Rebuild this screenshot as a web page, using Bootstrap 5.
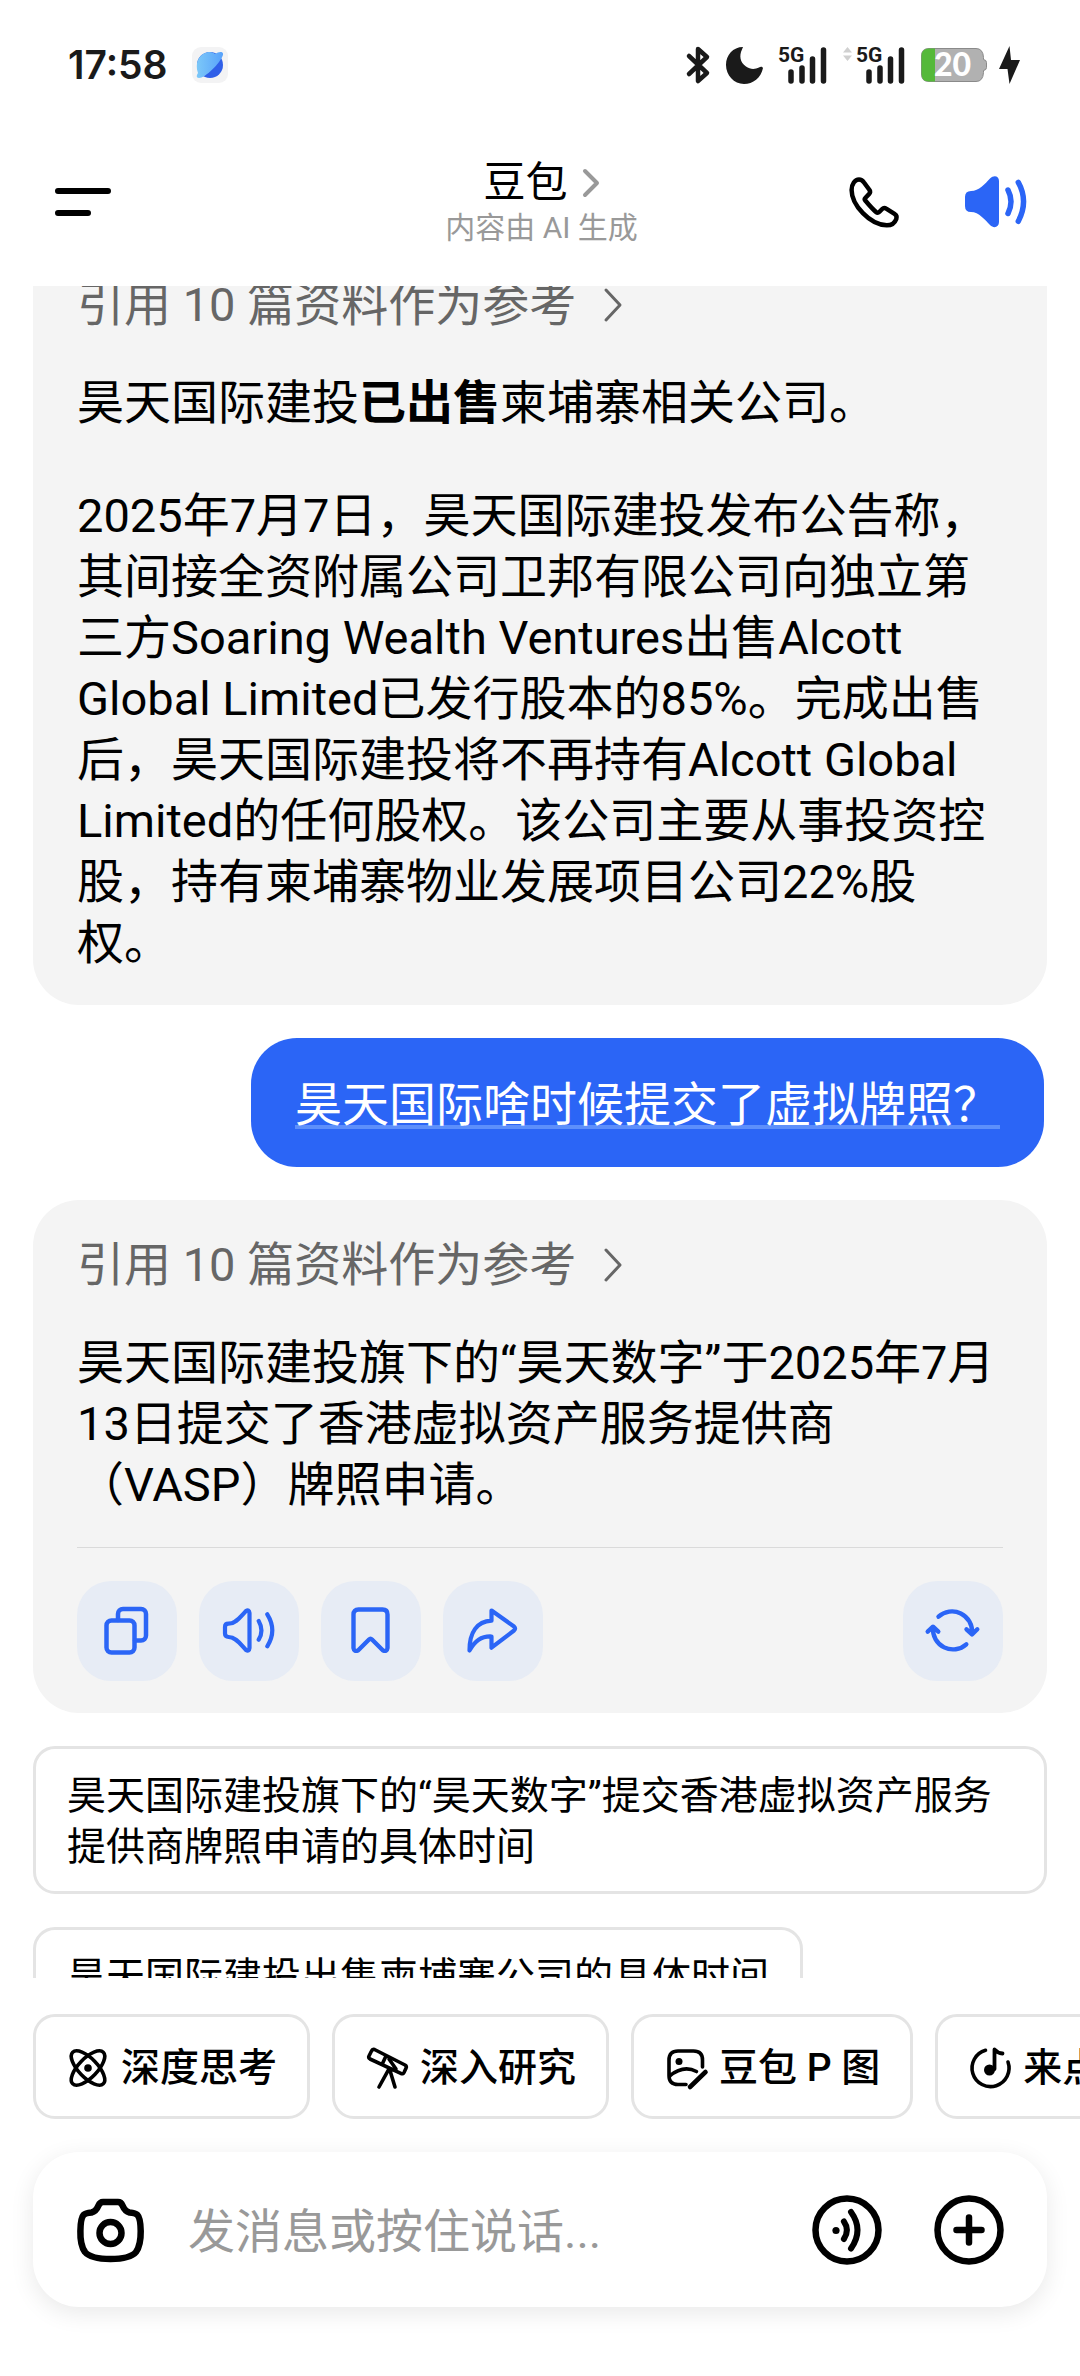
<!DOCTYPE html>
<html lang="zh-CN">
<head>
<meta charset="utf-8">
<meta name="viewport" content="width=device-width, initial-scale=1">
<title>豆包</title>
<link href="https://cdn.jsdelivr.net/npm/bootstrap@5.3.0/dist/css/bootstrap.min.css" rel="stylesheet">
<style>
  :root { --brand: #2b65f6; --line: #e4e4e4; }
  body { font-family: Roboto, "Noto Sans CJK SC", sans-serif; color: #000; background: #fff; text-spacing-trim: space-all; }
  svg { display: block; flex: none; overflow: visible; }
  .ln { fill: none; stroke: currentColor; stroke-linecap: round; stroke-linejoin: round; }
  .gutter { padding-left: 33px; padding-right: 33px; }

  .status { height: 130px; padding: 0 60px 0 68px; color: #1a1a1a; }
  .clock { font: 600 39px/48px Inter, sans-serif; margin-right: 24px; }
  .net { font: 700 21px Roboto, sans-serif; }
  .pct { font: 900 32px Lato, sans-serif; }
  .bolt { margin-left: 12px; }

  .topbar { height: 144px; margin-bottom: 12px; padding: 0 52px 0 55px; }
  .heading { padding-top: 4px; }
  .name { font-size: 42px; line-height: 48px; gap: 14px; }
  .name svg { color: #999; }
  .sub { font-size: 30px; line-height: 42px; color: #999; }
  .plain { background: none; border: 0; padding: 0; color: inherit; }
  .calls { gap: 64px; }
  .voice { color: var(--brand); }

  .chat { overflow-y: auto; scrollbar-width: none; gap: 33px; }
  .chat::-webkit-scrollbar { display: none; }
  .chat > * { flex: none; }
  .answer { background: #f4f4f4; border-radius: 46px; padding: 34px 44px 32px; font-size: 47px; line-height: 61px; }
  .answer p { margin: 0 0 52px; }
  .answer p:last-child { margin-bottom: 0; }
  .source { color: #666; text-decoration: none; gap: 28px; margin-bottom: 37px; }
  .question { background: var(--brand); color: #fff; border-radius: 46px; padding: 36px 44px 32px; margin-right: 3px; font-size: 47px; line-height: 61px; }
  .question span { text-decoration: underline 4px #5d8ffb; text-underline-offset: 4px; text-decoration-skip-ink: none; }
  .tools { border-top: 1px solid #dadada; margin-top: 32px; padding-top: 33px; gap: 22px; }
  .tool { width: 100px; height: 100px; border: 0; border-radius: 34px; background: #e7ecf5; color: var(--brand); }
  .hint { border: 3px solid var(--line); border-radius: 22px; background: #fff; padding: 22px 31px 18px; font-size: 39px; line-height: 51px; text-align: left; color: #000; max-width: 100%; }

  .chips { gap: 22px; overflow: hidden; margin-top: 36px; }
  .chip { border: 3px solid var(--line); border-radius: 22px; background: #fff; height: 105px; padding: 0 30px; gap: 11px; font-size: 39px; font-weight: 500; white-space: nowrap; flex: none; color: #000; }
  .chip span { padding-top: 4px; }
  .composer { height: 155px; border-radius: 46px; margin: 33px 33px 69px; padding: 0 43px 0 44px; background: #fff; box-shadow: 0 6px 24px rgba(0,0,0,.09); }
  .composer input { font-size: 47px; line-height: 61px; border: 0; outline: 0; background: none; margin: 0 46px 0 44px; min-width: 0; padding: 4px 0 0; }
  .composer input::placeholder { color: #999; opacity: 1; }
  .sends { gap: 52px; }
</style>
</head>
<body class="vh-100 d-flex flex-column overflow-hidden">

<div class="status d-flex align-items-center flex-shrink-0">
  <div class="clock">17:58</div>
  <svg width="36" height="36" viewBox="0 0 36 36">
    <defs><linearGradient id="pl" x1="0" x2="1"><stop offset="0" stop-color="#7cc8f8"/><stop offset="1" stop-color="#58a2fb"/></linearGradient></defs>
    <rect width="36" height="36" rx="9" fill="#f3f3f4"/>
    <circle cx="18" cy="18" r="13" fill="#2f5fe8"/>
    <path d="M23 7c3-2 7-3 8-.5C32 11 18 27 9.500 30.500 4 32 4 29 6 26 2 14 9 5 18 5c2 0 4 1 5 2z" fill="url(#pl)"/>
  </svg>
  <div class="ms-auto d-flex align-items-center">
    <svg width="24" height="38" viewBox="0 0 24 38"><path class="ln" stroke-width="4.500" d="M3 10l18 17-9 8V3l9 8L3 28"/></svg>
    <svg class="ms-3" width="37" height="38" viewBox="0 0 37 38"><path fill="#1a1a1a" d="M17 1C7 1 0 9 0 19s8 19 18 19c9 0 17-6 19-16-1-2-3-1-4-.5-4 2-9 2-13-1-6-4-7-11-4-17 .6-1.500.8-2 1-2.500z"/></svg>
    <svg class="ms-3" width="48" height="38" viewBox="0 0 48 38"><text class="net" x="-1" y="16" fill="#1a1a1a">5G</text><path class="ln" stroke-width="5.500" d="M12 26v9M23 22v13M33.500 13v22M44.500 4v31"/></svg>
    <svg class="ms-3" width="62" height="38" viewBox="0 0 62 38"><path fill="#d0d0d0" d="M0 6.500L4.500 1 9 6.500zM0 9.500L4.500 15 9 9.500z"/><text class="net" x="13" y="16" fill="#1a1a1a">5G</text><path class="ln" stroke-width="5.500" d="M26 26v9M37 22v13M47.500 13v22M58.500 4v31"/></svg>
    <svg class="ms-3" width="66" height="34" viewBox="0 0 66 34"><path fill="#b1b1b1" stroke="#8a8a8a" d="M8 .5h47q7 0 7.500 9v2q3 .5 3 3v5q0 2.500-3 3v2q-.5 9-7.500 9H8Q.5 33.500.5 26V8Q.5.5 8 .5z"/><path fill="#55b93a" d="M14 .5H8Q.5.5.5 8v18q0 7.500 7.500 7.500h6z"/><text class="pct" x="13" y="28" fill="#fff">20</text></svg>
    <svg class="bolt" width="21" height="38" viewBox="0 0 21 38"><path fill="#1a1a1a" d="M10.500 0L0 23h8.500l2 15L21 14h-9z"/></svg>
  </div>
</div>

<header class="topbar d-flex align-items-center flex-shrink-0">
  <div class="col d-flex">
    <button class="plain" aria-label="菜单"><svg width="56" height="30" viewBox="0 0 56 30"><path class="ln" stroke-width="6" d="M3 4h50M3 26h30"/></svg></button>
  </div>
  <div class="heading text-center">
    <button class="plain name d-flex align-items-center mx-auto">豆包<svg width="18" height="30" viewBox="0 0 18 30"><path class="ln" stroke-width="4" d="M3 3l12 12L3 27"/></svg></button>
    <div class="sub">内容由 AI 生成</div>
  </div>
  <div class="calls col d-flex justify-content-end align-items-center">
    <button class="plain" aria-label="通话"><svg width="52" height="52" viewBox="0 0 52 52"><path class="ln" stroke-width="4.500" d="M11 3.500c2.500 0 4 1.500 5 3l5.500 7.500c1 1.700.7 3-.5 4.200l-3.500 3.600c-1 1-1 2 0 3C21 29 24.500 33 28 36c1.200 1 2.200 1 3.200 0l3-3c1-1 2.500-1.300 4-.3l8.300 5.200c2 1.300 2.500 3 1.800 5-1.500 4-5 6.400-9.500 6.400C22 49 3.600 29 3.600 14 3.600 8 7 3.500 11 3.500z"/></svg></button>
    <button class="plain voice" aria-label="朗读"><svg width="64" height="52" viewBox="0 0 64 52"><path fill="currentColor" d="M7 15C15 15 21 8 26 2.500 30-1.500 35 0 35 5v41c0 5-5 7-9 3C21 44 15 36 7 36q-6 0-6-6v-9q0-6 6-6z"/><path class="ln" stroke-width="5.500" d="M44 14q6 11.500 0 23.500M54.300 6.300q10.500 19 0 39"/></svg></button>
  </div>
</header>

<main class="chat gutter d-flex flex-column flex-grow-1" id="chat">
  <article class="answer">
    <a href="#" class="source d-flex align-items-center">引用 10 篇资料作为参考<svg width="19" height="34" viewBox="0 0 19 34"><path class="ln" stroke-width="3" d="M2 2l14 15L2 32"/></svg></a>
    <p>昊天国际建投<strong>已出售</strong>柬埔寨相关公司。</p>
    <p>2025年7月7日，昊天国际建投发布公告称，其间接全资附属公司卫邦有限公司向独立第三方Soaring Wealth Ventures出售Alcott Global Limited已发行股本的85%。完成出售后，昊天国际建投将不再持有Alcott Global Limited的任何股权。该公司主要从事投资控股，持有柬埔寨物业发展项目公司22%股权。</p>
  </article>

  <div class="question align-self-end"><span>昊天国际啥时候提交了虚拟牌照？</span></div>

  <article class="answer">
    <a href="#" class="source d-flex align-items-center">引用 10 篇资料作为参考<svg width="19" height="34" viewBox="0 0 19 34"><path class="ln" stroke-width="3" d="M2 2l14 15L2 32"/></svg></a>
    <div>昊天国际建投旗下的“昊天数字”于2025年7月13日提交了香港虚拟资产服务提供商（VASP）牌照申请。</div>
    <div class="tools d-flex">
      <button class="tool d-flex align-items-center justify-content-center p-0" aria-label="复制"><svg width="48" height="48" viewBox="0 0 48 48"><g class="ln" stroke-width="4.500"><rect x="3.500" y="13.500" width="28" height="32" rx="5"/><path d="M15 13V7a5 5 0 0 1 5-5h18a5 5 0 0 1 5 5v21.500a5 5 0 0 1-5 5h-6"/></g></svg></button>
      <button class="tool d-flex align-items-center justify-content-center p-0" aria-label="朗读"><svg width="48" height="48" viewBox="0 0 48 48"><path class="ln" stroke-width="4.200" d="M3.500 16.700C11 16.700 16 9 21 4q3-2 3.500 2v35q-.5 4-3.500 2C16 38 11 30 3.500 30Q0 30 0 26.500v-6.500q0-3.300 3.500-3.300zM33.700 14q5.500 9.500 0 18.700M42.300 7.300q10 16 0 32"/></svg></button>
      <button class="tool d-flex align-items-center justify-content-center p-0" aria-label="收藏"><svg width="48" height="48" viewBox="0 0 48 48"><path class="ln" stroke-width="4.400" d="M6.500 7.500q0-5 5-5h24q5 0 5 5V41q-.5 4-4.500 2.500L25 32.500q-1.500-1.500-3 0L11 43.500Q7 45 6.500 41z"/></svg></button>
      <button class="tool d-flex align-items-center justify-content-center p-0" aria-label="分享"><svg width="48" height="48" viewBox="0 0 48 48"><path class="ln" stroke-width="4.200" d="M22.500 3.500l22.500 16q2.200 2 0 4L22.500 40.700V29.500C12 29 6 34 .5 43.500.5 25 8 14.500 22.500 13.700z"/></svg></button>
      <button class="tool d-flex align-items-center justify-content-center p-0 ms-auto" aria-label="重新生成"><svg width="48" height="48" viewBox="0 0 48 48"><path class="ln" stroke-width="4.400" d="M9.500 9.700A20 20 0 0 1 43 26M37.500 22.300l5.500 5.200 5.300-5.200M37.300 37.300A20 20 0 0 1 4 21M-1.300 24.700L4 19.700l5.300 5"/></svg></button>
    </div>
  </article>

  <button class="hint align-self-start">昊天国际建投旗下的“昊天数字”提交香港虚拟资产服务提供商牌照申请的具体时间</button>
  <button class="hint align-self-start">昊天国际建投出售柬埔寨公司的具体时间</button>
</main>

<footer class="flex-shrink-0">
  <nav class="chips gutter d-flex pe-0">
    <button class="chip d-flex align-items-center"><svg width="44" height="44" viewBox="0 0 44 44"><g class="ln" stroke-width="3.600"><ellipse cx="22" cy="23" rx="22" ry="9.500" transform="rotate(46 22 23)"/><ellipse cx="22" cy="23" rx="22" ry="9.500" transform="rotate(-46 22 23)"/></g><circle cx="22" cy="23" r="3.800"/></svg><span>深度思考</span></button>
    <button class="chip d-flex align-items-center"><svg width="44" height="44" viewBox="0 0 44 44"><path class="ln" stroke-width="3.600" d="M9.500 4.500L40 20q2 1.200 1 3.200l-2 4.300q-1 2-3.200.8L5 14q-2-1-1-3l2.500-5q1-2.300 3-1.500zM21 11l-4 8.500M24 14l7 10M24.300 23.300L14 42M24.300 23.300L30 42"/></svg><span>深入研究</span></button>
    <button class="chip d-flex align-items-center"><svg width="44" height="44" viewBox="0 0 44 44"><path class="ln" stroke-width="3.600" d="M38.500 22v-7q0-9-9-9H14q-9 0-9 9v15.500q0 9 9 9h8M5.500 31q14-11.500 27-4.500"/><path class="ln" stroke-width="4.600" d="M41.500 27L26 42"/><circle cx="15" cy="16.500" r="3.500"/></svg><span>豆包 P 图</span></button>
    <button class="chip d-flex align-items-center"><svg width="44" height="44" viewBox="0 0 44 44"><path class="ln" stroke-width="3.600" d="M17.500 5.300A18.500 18.500 0 1 0 40 17"/><path class="ln" stroke-width="3.800" d="M26.500 24V4.500q3 3.500 8 4"/><circle cx="21.500" cy="25" r="5.500"/></svg><span>来点音乐</span></button>
  </nav>
  <div class="composer d-flex align-items-center">
    <button class="plain" aria-label="拍照"><svg width="67" height="66" viewBox="0 0 67 66"><g class="ln" stroke-width="6.500"><path d="M26 5h15q3 0 4.500 3.500 2.500 6 7 7 6 .5 8 2.500 3 3 3.200 16 .2 14-4.700 21Q53 62 33.500 62T8 55Q3 48 3.400 34 3.600 21 6.500 18q2-2 8-2.500 4.500-1 7-7Q23 5 26 5z"/><circle cx="33.500" cy="36" r="11"/></g></svg></button>
    <input type="text" class="flex-grow-1" placeholder="发消息或按住说话..." aria-label="发消息">
    <div class="sends d-flex">
      <button class="plain" aria-label="语音"><svg width="70" height="70" viewBox="0 0 70 70"><g class="ln"><circle cx="35" cy="35" r="31.500" stroke-width="6.500"/><path stroke-width="6" d="M31.900 26.500q6 8.500 0 17.500M39 17q13 18 0 36.500"/></g><circle cx="24" cy="35.500" r="3.600"/></svg></button>
      <button class="plain" aria-label="更多"><svg width="70" height="70" viewBox="0 0 70 70"><g class="ln"><circle cx="35" cy="35" r="31.500" stroke-width="6.500"/><path stroke-width="6.500" d="M22.500 35h25M35 22.500v25"/></g></svg></button>
    </div>
  </div>
</footer>

<script src="https://cdn.jsdelivr.net/npm/bootstrap@5.3.0/dist/js/bootstrap.bundle.min.js"></script>
<script>
  // Open the conversation slightly scrolled, past the top edge of the first answer.
  document.getElementById('chat').scrollTop = 46;
</script>
</body>
</html>
